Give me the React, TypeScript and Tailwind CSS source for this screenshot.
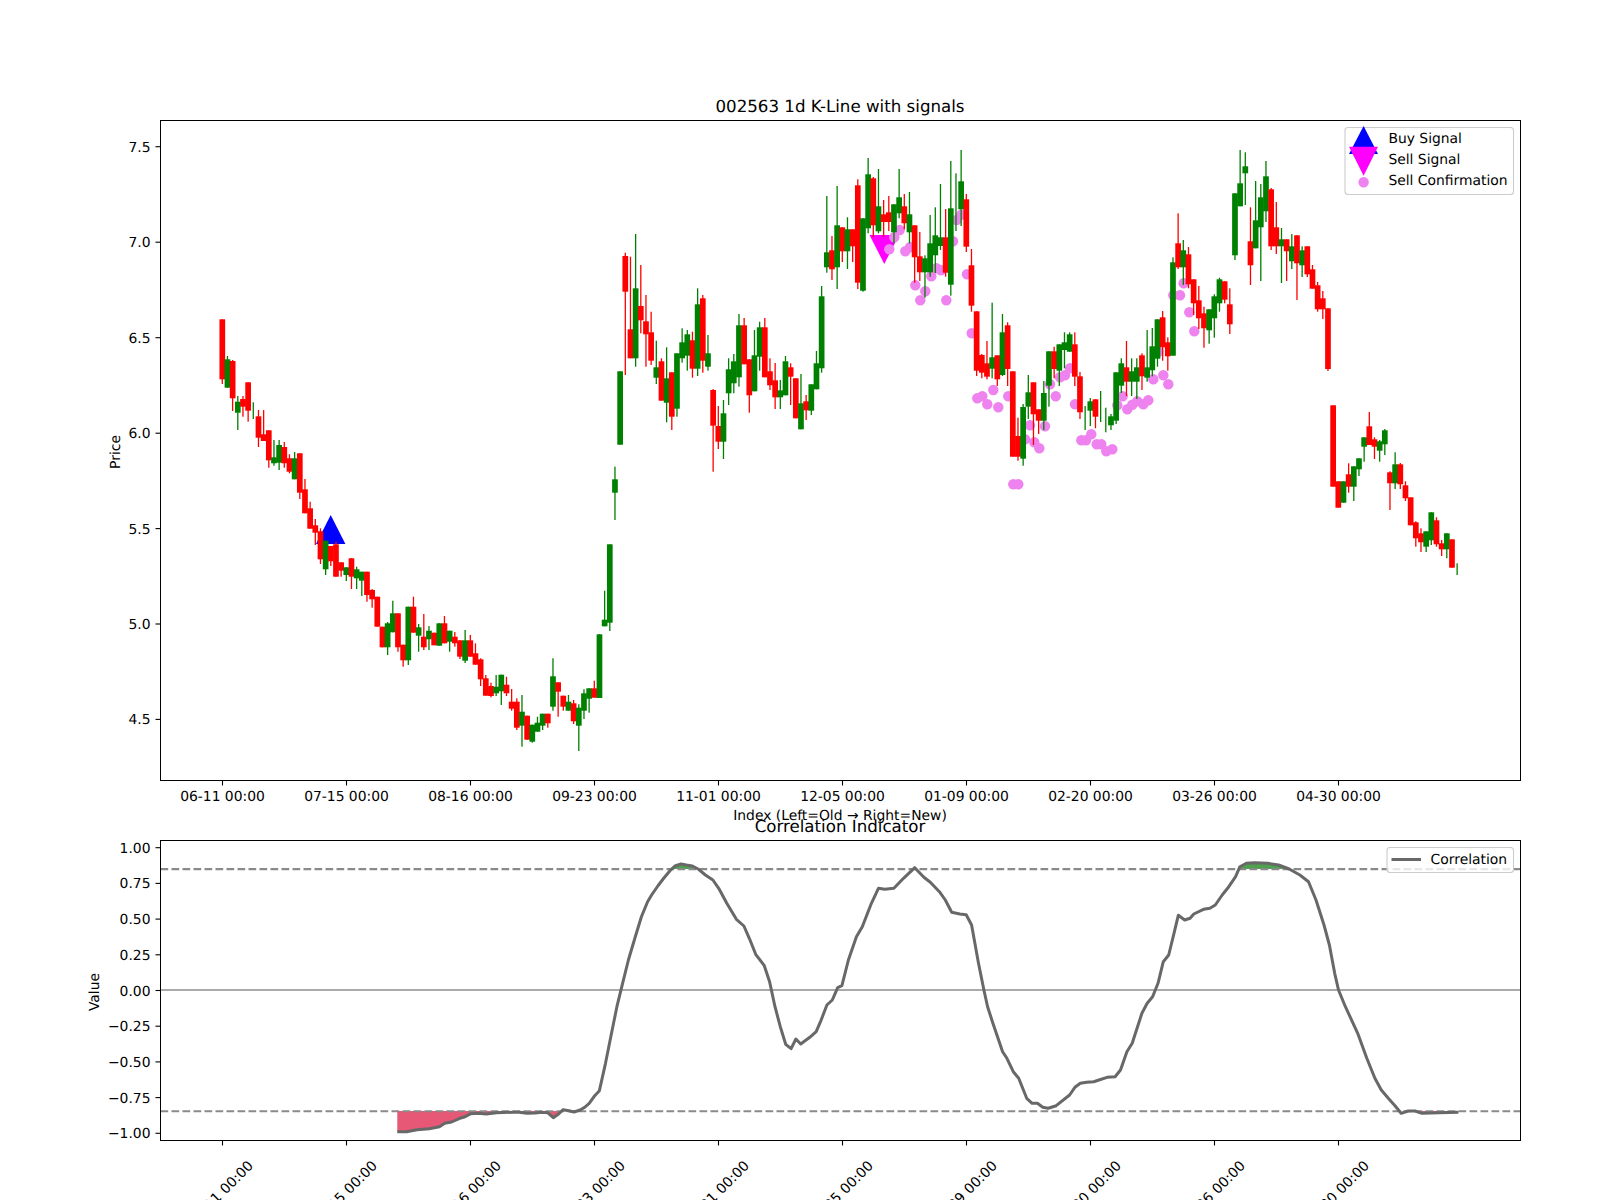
const X0 = 222.3;
const STEP = 5.1667;
const cx = (i: number) => X0 + STEP * i;

// [colour 0 red / 1 green, body top, body bottom, wick top, wick bottom] in picture pixels; 0 = same as body / no body
const C: number[][] = [
[0,319.3,379.3,0,384],[1,359.3,387.7,356,0],[0,361,398.3,360,411],[1,401.7,412.7,396,430],[0,399,406.7,396,416.7],[0,382.3,410.7,0,421.7],[1,0,0,402.3,419],[0,416.3,437.7,410,447],[0,434.3,441,410,0],[0,430.3,460.3,0,467.7],
[1,457.3,463.3,440,465.7],[1,445,462.7,440,470],[0,447,463.3,442,467.7],[0,458.3,471.7,454.3,473.3],[1,458.3,479.3,452,0],[0,453.3,492.7,0,499],[0,489.3,513.3,479,0],[0,508.3,528.7,501.7,0],[0,525.3,532.7,519,545],[0,531.3,559.3,528.3,564],
[1,540.7,569.3,0,575],[0,546,561.3,0,566],[0,544.3,576.7,541.7,0],[0,562.3,570.7,0,576.7],[1,567.3,575,0,581],[0,558.3,576.7,0,589],[1,569.3,578.3,566.7,589],[1,571.7,580.7,0,596],[0,571.7,595,0,601.7],[0,590,599.3,589,607.7],
[0,596.7,626.7,0,0],[0,626.7,647.3,0,0],[1,623.3,647.3,622,655],[1,613.3,632.3,600.7,0],[0,613.3,647.3,0,651.7],[0,644.7,660.3,0,666.7],[1,606.7,660.3,0,665],[0,606.7,632.7,596.7,0],[1,627.3,635.7,624,651.7],[0,636.7,647.3,614,650],
[1,630.7,639.3,626,650],[0,632.7,645.3,0,0],[1,623.3,645.7,0,0],[0,623.3,643.3,616,0],[1,630.7,641.7,0,651.7],[0,636.7,643.3,632,646.7],[0,640.3,656.7,0,659],[1,640.3,660.7,630,663],[0,640.3,656.7,635,0],[0,653.3,664.7,643.3,0],
[0,659.3,679.3,658.3,686],[0,678.3,695.7,675,0],[0,686,696,682.7,697.3],[1,686.7,693.3,675,696],[1,674.7,691.3,0,705],[0,684.7,693.3,676.7,696],[0,701.7,708.7,689,710.7],[0,701.7,727.7,698.3,730],[1,711.7,725.7,695,746.7],[0,715.7,739.7,0,0],
[1,724.7,741.7,0,742.7],[1,722.7,731.7,716.7,0],[1,713.7,725.7,0,730],[0,713.7,723.3,0,727.7],[1,676.3,706.7,658.3,710.7],[0,682.3,691.7,0,716.7],[0,695.7,706.7,0,710.7],[1,701.7,710.7,695,0],[0,703.3,721.3,700,724],[1,707.7,725.7,704.3,751],
[1,693.3,710.7,689.3,719],[1,688.3,698.7,0,712.7],[0,688.3,697.7,680.7,0],[1,634.3,698,0,0],[1,619.7,626.3,590.7,0],[1,544.3,622.7,0,631],[1,479.3,492.7,466.7,520],[1,371.3,444.7,0,0],[0,256,291.7,252.7,375],[0,329.3,358.3,256.7,0],
[1,288.3,358.3,234,366.7],[0,306,320.3,265,333.3],[0,321.3,334.3,295,366.7],[0,332.3,360.7,311.7,365],[1,367.3,377.7,340.7,384],[0,361.3,400.7,358.3,0],[1,378.3,402.7,347.3,422.3],[0,372.3,416.7,0,430],[1,353.3,408.7,0,416.7],[1,342.3,358.3,328.3,362.7],
[1,334.3,355.7,330,370.7],[0,340.3,368.7,331.7,377.7],[1,304.3,368.7,288.3,376],[0,298.3,360.7,295,372.7],[1,353.3,366.7,335,370.7],[0,390,425.7,389,471.7],[0,426,441.7,406,449],[1,413.3,441.7,400,459],[1,369.3,393.3,358.3,405],[1,361.3,383.3,354,393.3],
[1,325.3,377.3,314,386.7],[0,325.3,364.3,318,0],[0,359.3,395.3,0,412.7],[1,355.3,391.3,330,0],[1,327.3,356.7,321.7,370.7],[0,327.3,377.3,318,0],[0,371.3,385.3,358.3,390],[0,380.3,397.3,363,409],[1,390.3,397.3,380,409],[1,361.3,395.3,356,0],
[0,367.3,376.7,363.3,405],[0,378.3,418.3,0,0],[1,403.3,429.3,374,0],[0,401.3,410.3,395,420],[1,384.3,410.7,0,415],[1,363.3,389.3,351,0],[1,296.3,368.3,286,372.7],[1,252.3,267.3,196,272.7],[0,250.3,269.3,236,280],[1,225.3,267.3,186,289],
[0,227.3,251.3,0,262],[1,229.3,251.3,217.3,269],[0,229.3,246.3,0,262],[0,185.3,282.7,179.3,289],[1,218.3,290.7,0,291.7],[1,174.3,228.3,158,233.3],[0,178.3,225.3,177,237.3],[1,206.3,231.3,169,233.3],[0,214.3,222,200,236.7],[0,212.3,222,196,231],
[1,204.3,232.3,0,243.3],[1,197.3,213.3,169,218.3],[0,206.3,223.3,194,229.3],[1,214.3,232.3,192,243.3],[0,225.3,257.3,0,282.7],[0,256.3,272.3,232,281],[1,258.3,272.3,255.3,297.7],[1,243.3,272.3,215,276.7],[1,235.3,255.3,207.3,273],[1,237.3,246,184,250],
[0,237.3,272.7,209,276.7],[1,208.3,284.7,161,295.7],[1,0,0,173.3,231],[1,181.3,209.3,150,226],[0,199.3,246.7,194,252],[0,265.3,305.7,249,311.7],[0,311.3,370.7,0,376],[0,355,372.7,354,378.3],[0,363.3,376.7,341,379.3],[1,357.3,368.7,302.7,378.3],
[0,355.3,379.3,0,386],[1,332.3,375,314,376],[0,325.3,369,322.3,386],[0,371.3,456.7,0,0],[0,436,456.7,417.7,460.7],[1,407,458.7,404,465.7],[1,392.3,406.7,375,419],[0,382.3,414.3,0,445],[0,409.3,420.7,0,434],[1,393,420.7,381,430],
[1,351.3,385.7,0,406.7],[0,351.3,369,346.7,378.3],[1,344.3,370.7,0,386],[1,342.3,350,332.3,368.3],[1,334.3,351.7,332.3,0],[0,344.3,376.7,332.3,386],[0,376.3,412.3,372,419],[1,0,0,406,430],[1,401.3,410.7,398,426],[0,399.3,416.7,0,428.3],
[1,0,0,391,422],[1,0,0,407.7,432.3],[1,416.3,425.3,414,430],[1,372.3,420.7,0,424],[1,363.3,385.7,358.3,393],[0,367.3,381.7,341,396],[1,371.3,381.7,358.3,396],[1,367.3,381.7,358.3,399],[0,355.3,376.3,353.3,390],[1,367.3,377.7,330,381.7],
[1,346.3,370.3,328,376.3],[1,319.3,358.7,0,366.7],[0,317.3,347.3,311,360.7],[0,342.3,356.3,337.3,370.7],[1,262.3,355.7,257.3,0],[0,243.3,267.3,213.3,269],[1,250.3,267.3,240,285],[0,254.3,284.3,247,288.3],[0,279.3,303.3,0,315],[0,300.3,318.3,286,329],
[0,313.3,328.3,306.7,347.7],[1,309.3,330.3,0,343.7],[1,296.3,318.3,294.3,337.7],[1,279.3,303.3,277.7,311.7],[0,281.3,299.7,0,303.3],[0,304.3,324.3,288.3,334],[1,193.3,255.3,0,260],[1,183.3,206.3,150,0],[1,166.3,173.3,152.3,205],[0,241.3,265.3,207.3,285],
[1,220.3,248.3,181,0],[1,197.3,227.3,184,281],[1,176.3,211.3,161,222],[0,189.3,246.3,188,250],[0,227.3,246.3,202,254],[1,239.3,246.3,228,283],[0,239.3,251.3,0,281],[1,246.3,261.3,234,269],[0,235.3,263.3,0,300],[1,250.3,265.3,246.3,277],
[0,246.3,274.3,0,277],[0,269.3,288.7,265,0],[0,285.3,309.3,282,311.7],[0,298.3,309.3,291,319],[0,308.3,369,0,371],[0,405.3,486.7,0,0],[0,481.3,507.7,0,0],[1,481.3,502.7,0,0],[0,474.3,486.7,463.3,492.7],[1,466.3,486.7,0,501],
[1,458.3,469.3,0,476],[1,437.3,446.7,0,461.7],[0,426.3,445,412,0],[0,439.3,446.7,437.3,459],[1,441.3,450.7,440,461.7],[1,430.3,444.3,429,455],[0,472.3,483.3,471.3,510],[1,464.3,483.3,452.3,489],[0,464.3,484.3,463,489],[0,485.3,498.3,481.3,501],
[0,497.3,525.3,0,0],[0,522.3,538.3,521.3,546.7],[0,533.3,542.3,528.3,552],[1,531.3,546.7,0,552],[1,512.3,540.3,0,545],[0,520.3,544.3,517.3,546.7],[0,543.3,549.3,540,556],[1,533.3,549.3,0,558.3],[0,539.3,567.7,0,0],[1,0,0,563.3,575],
];

const DOTS: number[][] = [
[894.3,237.3],[899.7,230],[889.3,249.3],[905.3,251.3],[910,247.3],[915.3,285.3],[925.3,291.3],[920.3,300.3],[931.3,276.3],[936.3,268.3],[941,270.3],[946.3,300.3],[953,241.3],[956.7,220],[961.3,214.7],[967,274.3],[971.7,333.3],
[977.3,398.3],[982.3,396.3],[987.3,404.3],[993.3,390],[998.3,407.3],[1008.3,396.3],[1013.3,484.3],[1018.3,484.3],[1025,439.3],[1030,425.3],[1034.3,442.3],[1039.3,448.3],[1045,426.3],[1050,384.3],[1055.7,396.3],[1060,377.3],[1065,375.3],[1070,368.3],[1075,404.3],
[1081.3,440.3],[1086,440.3],[1091.3,434.3],[1096.7,444.3],[1101.3,444.3],[1106.3,451.3],[1112.3,449.3],[1117.3,405.3],[1122.7,396.3],[1127.3,409.3],[1132.3,404.7],[1137.3,401.3],[1143.3,404.3],[1148.3,400.3],[1153.3,379.3],[1158.3,351.7],[1163.3,375.3],[1168.3,384.3],
[1173.3,295.3],[1180,295.3],[1183.7,283.3],[1189.3,312.3],[1194.3,331.3],
];

const z7 = (p: number[]) => [70 + p[0] / 2.45, 800 + p[1] / 3];
const z8 = (p: number[]) => [700 + p[0] / 1.867, 800 + p[1] / 3];
const LEFT: number[][] = [
[802,995],[825,995],[850,989],[880,986],[905,980],[918,970],[935,966],[955,955],[968,950],[982,941],[1000,940],[1020,942],[1045,938],[1085,937],[1100,937],[1120,940],[1140,939],[1155,937],[1170,938],[1184,953],[1197,942],[1208,929],[1222,932],[1235,936],[1250,930],[1262,921],[1272,910],[1285,888],[1297,872],[1312,790],[1325,710],[1340,620],[1352,560],[1368,480],[1385,410],[1400,350],[1415,305],[1425,285],[1440,258],[1455,234],[1470,212],[1482,198],[1497,192],[1510,195],[1525,198],[1540,208],
].map(z7);
const RIGHT: number[][] = [
[10,225],[24,240],[35,265],[50,310],[68,358],[82,378],[92,415],[104,463],[120,497],[130,545],[140,620],[150,680],[160,733],[170,746],[179,717],[188,732],[205,712],[217,695],[225,665],[237,615],[247,600],[257,563],[265,557],[277,480],[292,410],[303,380],[320,310],[333,265],[345,268],[362,265],[380,235],[401,203],[418,232],[430,247],[447,275],[458,300],[470,337],[485,342],[497,344],[507,375],[520,490],[530,570],[537,620],[546,665],[565,755],[573,775],[585,815],[595,835],[610,895],[620,910],[630,910],[640,922],[650,925],[665,917],[690,885],[700,862],[710,850],[722,847],[735,845],[745,840],[760,832],[775,830],[785,810],[797,755],[807,730],[825,640],[835,610],[845,590],[855,550],[865,485],[875,465],[885,400],[893,346],[905,360],[915,355],[922,342],[940,328],[952,325],[962,315],[975,285],[985,265],[1000,230],[1008,200],[1020,190],[1035,188],[1060,190],[1080,195],[1100,207],[1120,225],[1136,245],[1150,300],[1165,375],[1175,435],[1185,520],[1192,570],[1205,620],[1215,655],[1228,700],[1245,775],[1260,835],[1272,870],[1285,895],[1298,918],[1309,940],[1322,933],[1335,933],[1348,940],[1380,938],[1416,937],
].map(z8);
const pts = (a: number[][]) => a.map((p) => p[0].toFixed(1) + "," + p[1].toFixed(1)).join(" ");
const LINE = pts([...LEFT, ...RIGHT]);

const redA = pts([z7([802, 933]), ...LEFT.slice(0, 21), z7([1204, 933])]);
const redB = pts([[1340,933],[1348,940],[1380,938],[1416,937],[1416,933]].map(z8));
const greenA = pts([[1474,207],[1482,198],[1497,192],[1510,195],[1525,198],[1532,207]].map(z7));
const greenB = pts([[1004,207],[1008,200],[1020,190],[1035,188],[1060,190],[1080,195],[1100,207]].map(z8));

const TICKS = ["06-11", "07-15", "08-16", "09-23", "11-01", "12-05", "01-09", "02-20", "03-26", "04-30"];
const TICK_X = TICKS.map((_, k) => 222.5 + 124 * k);
const Y_TOP: [string, number][] = [["7.5", 146.7], ["7.0", 242.2], ["6.5", 337.7], ["6.0", 433.2], ["5.5", 528.6], ["5.0", 624], ["4.5", 719.4]];
const Y_BOT: [string, number][] = [["1.00", 847.7], ["0.75", 883.4], ["0.50", 919.1], ["0.25", 954.8], ["0.00", 990.5], ["\u22120.25", 1026.2], ["\u22120.50", 1061.9], ["\u22120.75", 1097.6], ["\u22121.00", 1133.3]];

export default function App() {
  return (
    <div className="w-[1600px] h-[1200px] bg-white overflow-hidden">
      <svg width={1600} height={1200} viewBox="0 0 1600 1200" textRendering="geometricPrecision" className="block font-['DejaVu_Sans',sans-serif] text-black">
        {/* upper chart marks */}
        <polygon points="330.7,515 316,544 345.4,544" fill="#0000ff" />
        <polygon points="884.3,264 869.5,235 899,235" fill="#ff00ff" />
        {DOTS.map((d, i) => (
          <circle key={i} cx={d[0]} cy={d[1]} r={5.2} fill="#ee82ee" />
        ))}
        {C.map((c, i) => {
          const col = c[0] ? "#008000" : "#ff0000";
          const x = cx(i);
          const hi = c[3] || c[1];
          const lo = c[4] || c[2];
          return (
            <g key={i}>
              <rect x={x - 0.65} y={hi} width={1.3} height={lo - hi} fill={col} />
              {c[1] > 0 && <rect x={x - 2.85} y={c[1]} width={5.7} height={c[2] - c[1]} fill={col} />}
            </g>
          );
        })}

        {/* upper axes */}
        <rect x={160.5} y={120.5} width={1360} height={660} fill="none" stroke="#000" strokeWidth={1.1} shapeRendering="crispEdges" />
        {Y_TOP.map(([t, y]) => (
          <g key={t}>
            <line x1={155.5} x2={160.5} y1={y} y2={y} stroke="#000" strokeWidth={1.1} />
            <text x={150.5} y={y + 5} textAnchor="end" fontSize={13.89}>{t}</text>
          </g>
        ))}
        {TICKS.map((t, k) => (
          <g key={t}>
            <line x1={TICK_X[k]} x2={TICK_X[k]} y1={780.5} y2={785.5} stroke="#000" strokeWidth={1.1} />
            <text x={TICK_X[k]} y={801} textAnchor="middle" fontSize={13.89}>{t + " 00:00"}</text>
          </g>
        ))}
        <text x={840} y={112} textAnchor="middle" fontSize={16.67}>002563 1d K-Line with signals</text>
        <text x={840} y={820} textAnchor="middle" fontSize={13.89}>Index (Left=Old → Right=New)</text>
        <text transform="translate(120 452) rotate(-90)" textAnchor="middle" fontSize={13.89}>Price</text>

        {/* upper legend */}
        <rect x={1345} y={127.5} width={168.5} height={67} rx={3} fill="#fff" fillOpacity={0.8} stroke="#ccc" strokeWidth={1.1} />
        <polygon points="1363.6,126 1349,154 1378,154" fill="#0000ff" />
        <polygon points="1363.6,175.7 1349,146.7 1378,146.7" fill="#ff00ff" />
        <circle cx={1363.6} cy={182.3} r={5.2} fill="#ee82ee" />
        <text x={1388.4} y={143} fontSize={13.89}>Buy Signal</text>
        <text x={1388.4} y={164} fontSize={13.89}>Sell Signal</text>
        <text x={1388.4} y={185} fontSize={13.89}>Sell Confirmation</text>

        {/* lower chart */}
        <polygon points={redA} fill="#e0284f" fillOpacity={0.78} />
        <polygon points={redB} fill="#e0284f" fillOpacity={0.78} />
        <polygon points={greenA} fill="#228b22" fillOpacity={0.8} />
        <polygon points={greenB} fill="#228b22" fillOpacity={0.8} />
        <line x1={160.5} x2={1520.5} y1={869.1} y2={869.1} stroke="#8a8a8a" strokeWidth={2.08} strokeDasharray="7.7 3.3" />
        <line x1={160.5} x2={1520.5} y1={1111.2} y2={1111.2} stroke="#8a8a8a" strokeWidth={2.08} strokeDasharray="7.7 3.3" />
        <line x1={160.5} x2={1520.5} y1={990} y2={990} stroke="#aaaaaa" strokeWidth={2.08} />
        <polyline points={LINE} fill="none" stroke="#686868" strokeWidth={3} strokeLinejoin="round" />

        {/* lower axes */}
        <rect x={160.5} y={840.5} width={1360} height={300} fill="none" stroke="#000" strokeWidth={1.1} shapeRendering="crispEdges" />
        {Y_BOT.map(([t, y]) => (
          <g key={t}>
            <line x1={155.5} x2={160.5} y1={y} y2={y} stroke="#000" strokeWidth={1.1} />
            <text x={150.5} y={y + 5} textAnchor="end" fontSize={13.89}>{t}</text>
          </g>
        ))}
        {TICKS.map((t, k) => (
          <g key={t}>
            <line x1={TICK_X[k]} x2={TICK_X[k]} y1={1140.5} y2={1145.5} stroke="#000" strokeWidth={1.1} />
            <text transform={`translate(${TICK_X[k] - 2} 1193) rotate(-45)`} y={5} textAnchor="middle" fontSize={13.89}>{t + " 00:00"}</text>
          </g>
        ))}
        <text x={840} y={832} textAnchor="middle" fontSize={16.67}>Correlation Indicator</text>
        <text transform="translate(98.5 992) rotate(-90)" textAnchor="middle" fontSize={13.89}>Value</text>

        {/* lower legend */}
        <rect x={1387} y={847.5} width={126.5} height={25} rx={3} fill="#fff" fillOpacity={0.8} stroke="#ccc" strokeWidth={1.1} />
        <line x1={1391.5} x2={1421} y1={859.5} y2={859.5} stroke="#686868" strokeWidth={3} />
        <text x={1430.6} y={863.8} fontSize={13.89}>Correlation</text>
      </svg>
    </div>
  );
}
